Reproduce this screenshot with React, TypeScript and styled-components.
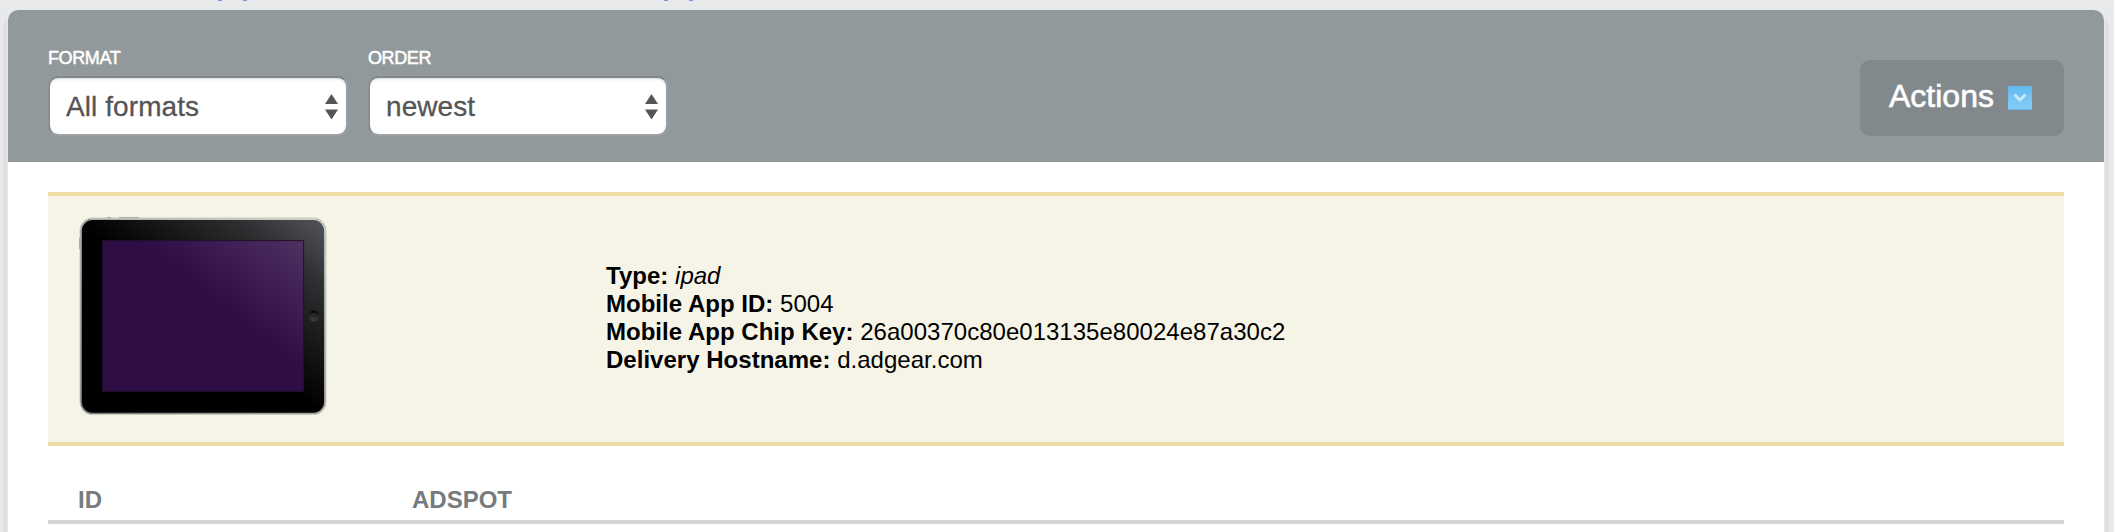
import React from "react";
import styled, { createGlobalStyle } from "styled-components";

const GlobalStyle = createGlobalStyle`
  * { box-sizing: border-box; }
  body {
    margin: 0;
    background: #e8e9eb;
    font-family: "Liberation Sans", Arial, sans-serif;
    overflow: hidden;
  }
`;

const Page = styled.div`
  height: 532px;
  padding: 0 10px 0 8px;
  display: flex;
  flex-direction: column;
  overflow: hidden;
`;

const LinkStrip = styled.div`
  height: 10px;
  flex: none;
  overflow: hidden;
`;

const Descenders = styled.svg`
  display: block;
`;

const Panel = styled.main`
  height: 560px;
  flex: none;
  background: #fff;
  border-radius: 10px 10px 0 0;
  box-shadow: 0 0 0 1px #e6e8e9, 0 8px 0 5px #dfe0e2;
`;

const Toolbar = styled.header`
  height: 152px;
  padding: 0 40px;
  background: #92999c;
  border-radius: 10px 10px 0 0;
  display: flex;
  justify-content: space-between;
`;

const Filters = styled.div`
  display: flex;
  gap: 20px;
  padding-top: 38px;
`;

const Field = styled.div`
  width: 300px;
`;

const Label = styled.div`
  height: 28px;
  line-height: 20px;
  font-size: 18px;
  letter-spacing: -0.38px;
  color: #fff;
  -webkit-text-stroke: 0.5px #fff;
`;

const Select = styled.div`
  height: 60px;
  border: 2px solid;
  border-color: #81878a #999fa2 #9ba1a4 #888f92;
  border-radius: 10px;
  background: #fff;
  background-clip: padding-box;
  box-shadow: inset 0 2px 3px -1px #d5d7d8;
  padding: 1px 8px 0 16px;
  display: flex;
  align-items: center;
  justify-content: space-between;
  font-size: 28px;
  line-height: 32px;
  letter-spacing: 0.08px;
  color: #555;
  -webkit-text-stroke: 0.3px #555;
`;

const ActionsButton = styled.div`
  width: 204px;
  height: 76px;
  margin-top: 50px;
  padding: 0 32px 0 29px;
  border-radius: 10px;
  background: #82898c;
  color: #fff;
  font-size: 32px;
  line-height: 72px;
  -webkit-text-stroke: 0.6px #fff;
  display: flex;
  justify-content: space-between;

  svg {
    margin-top: 26px;
  }
`;

const Content = styled.div`
  padding: 30px 40px 0;
`;

const AppCard = styled.section`
  height: 254px;
  border-top: 4px solid #eddda2;
  border-bottom: 4px solid #eddda2;
  background: #f6f4e7;
  display: flex;
  padding-left: 30px;
`;

const Device = styled.div`
  width: 528px;
  padding-top: 19px;
`;

const TabletArt = styled.svg`
  display: block;
`;

const Details = styled.div`
  padding-top: 66px;
  font-size: 24px;
  line-height: 28px;
  letter-spacing: 0.02px;
  color: #000;
`;

const Columns = styled.div`
  margin-top: 34px;
  height: 44px;
  border-bottom: 4px solid #d5d5d5;
  display: grid;
  grid-template-columns: 334px 1fr;
  padding-left: 30px;
  font-size: 24px;
  line-height: 28px;
  font-weight: bold;
  color: #757b7f;
`;

const ColumnTitle = styled.div`
  padding-top: 6px;
`;

function Arrows() {
  return (
    <svg width="13" height="26" viewBox="0 0 13 26">
      <path d="M6.5 0 13 10H0zM0 15.5h13L6.5 25.5z" fill="#555" />
    </svg>
  );
}

function ActionsIcon() {
  return (
    <svg width="24" height="24" viewBox="0 0 24 24">
      <defs>
        <linearGradient id="blue" x1="0" y1="0" x2="0" y2="1">
          <stop offset="0" stopColor="#61b9ed" />
          <stop offset="0.9" stopColor="#85cdf8" />
          <stop offset="1" stopColor="#66b6e6" />
        </linearGradient>
      </defs>
      <rect width="24" height="24" rx="1" fill="url(#blue)" />
      <path d="M6.5 8.5 11.8 14 17.5 8.5" fill="none" stroke="#c9e9fb" strokeWidth="2.8" />
    </svg>
  );
}

function Tablet() {
  return (
    <TabletArt width="252" height="202" viewBox="0 0 252 202">
      <defs>
        <linearGradient id="bezel" gradientUnits="userSpaceOnUse" x1="246" y1="4" x2="150" y2="125">
          <stop offset="0" stopColor="#53555b" />
          <stop offset="0.35" stopColor="#2e2f31" />
          <stop offset="1" stopColor="#000" />
        </linearGradient>
        <linearGradient id="glass" gradientUnits="userSpaceOnUse" x1="224" y1="26" x2="160" y2="104">
          <stop offset="0" stopColor="#4d3160" />
          <stop offset="0.4" stopColor="#422258" />
          <stop offset="1" stopColor="#2e0e44" />
        </linearGradient>
        <linearGradient id="rim" x1="0" y1="1" x2="1" y2="0">
          <stop offset="0" stopColor="#77797b" />
          <stop offset="1" stopColor="#d6d6d0" />
        </linearGradient>
        <linearGradient id="home" x1="0" y1="0" x2="0" y2="1">
          <stop offset="0" stopColor="#050505" />
          <stop offset="1" stopColor="#404042" />
        </linearGradient>
      </defs>
      <path d="M29 2.6h4M41 2.6h20M1.6 23v11" stroke="#8c8c84" strokeWidth="1.2" />
      <rect x="2.2" y="3.3" width="245.6" height="196" rx="12.5" fill="#000" stroke="#c9c9c0" strokeWidth="1.4" />
      <rect x="3.2" y="4.3" width="243.6" height="194" rx="11.5" fill="url(#bezel)" stroke="url(#rim)" strokeWidth="1.3" />
      <rect x="24.4" y="25.6" width="201.2" height="150.8" fill="url(#glass)" stroke="#21122b" strokeWidth="1" />
      <circle cx="235.8" cy="101" r="5.6" fill="url(#home)" />
      <rect x="233.8" y="99" width="4" height="4" rx="1" fill="none" stroke="#3a3a3a" strokeWidth="0.8" />
    </TabletArt>
  );
}

export default function App() {
  return (
    <>
      <GlobalStyle />
      <Page>
        <LinkStrip>
          <Descenders width="700" height="1">
            <path d="M210 0.5h4M235 0.5h4M656 0.5h4M681 0.5h4" stroke="#7b95dc" />
          </Descenders>
        </LinkStrip>
        <Panel>
          <Toolbar>
            <Filters>
              <Field>
                <Label>FORMAT</Label>
                <Select>All formats<Arrows /></Select>
              </Field>
              <Field>
                <Label>ORDER</Label>
                <Select>newest<Arrows /></Select>
              </Field>
            </Filters>
            <ActionsButton>Actions<ActionsIcon /></ActionsButton>
          </Toolbar>
          <Content>
            <AppCard>
              <Device><Tablet /></Device>
              <Details>
                <div><b>Type:</b> <i>ipad</i></div>
                <div><b>Mobile App ID:</b> 5004</div>
                <div><b>Mobile App Chip Key:</b> 26a00370c80e013135e80024e87a30c2</div>
                <div><b>Delivery Hostname:</b> d.adgear.com</div>
              </Details>
            </AppCard>
            <Columns>
              <ColumnTitle>ID</ColumnTitle>
              <ColumnTitle>ADSPOT</ColumnTitle>
            </Columns>
          </Content>
        </Panel>
      </Page>
    </>
  );
}
